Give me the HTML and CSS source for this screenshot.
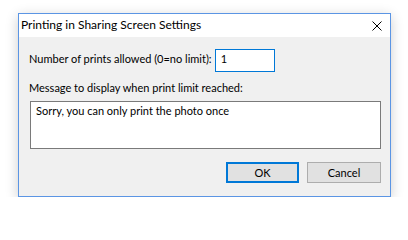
FILE: index.html
```html
<!DOCTYPE html>
<html>
<head>
<meta charset="utf-8">
<link rel="stylesheet" href="styles.css">
</head>
<body>
<div class="dialog">
  <div class="titlebar">
    <span class="title">Printing in Sharing Screen Settings</span>
    <svg class="close" width="10" height="10" viewBox="0 0 10 10"><path d="M0.5 0.5L9.5 9.5M9.5 0.5L0.5 9.5" stroke="#000" stroke-width="1" fill="none"/></svg>
  </div>
  <div class="client">
    <div class="row">
      <span class="label">Number of prints allowed (0=no limit):</span>
      <div class="input">1</div>
    </div>
    <div class="label msg-label">Message to display when print limit reached:</div>
    <div class="textarea">Sorry, you can only print the photo once</div>
    <div class="buttons">
      <div class="btn btn-default">OK</div>
      <div class="btn btn-cancel">Cancel</div>
    </div>
  </div>
</div>
</body>
</html>
```
FILE: styles.css
```css
html, body {
  margin: 0;
  padding: 0;
  background: #ffffff;
}
body {
  font-family: Lato, "Liberation Sans", sans-serif;
  font-size: 11px;
  color: #000;
  padding: 13px 0 0 18px;
}
.dialog {
  box-sizing: border-box;
  width: 373px;
  height: 184px;
  border: 1px solid #5b95e4;
  background: #f0f0f0;
  display: flex;
  flex-direction: column;
  box-shadow: 0 3px 12px rgba(0, 0, 0, 0.2);
}
.titlebar {
  height: 23px;
  background: #ffffff;
  display: flex;
  align-items: center;
  justify-content: space-between;
  padding: 0 8px 0 2px;
}
.title {
  font-size: 12px;
  line-height: 22px;
  padding-bottom: 1px;
}
.close {
  display: block;
}
.client {
  flex: 1;
  display: flex;
  flex-direction: column;
  padding: 12px 9px 0 11px;
}
.row {
  display: flex;
  align-items: baseline;
  gap: 3px;
}
.label {
  line-height: 16px;
  margin-left: -1px;
}
.input {
  box-sizing: border-box;
  width: 60px;
  height: 23px;
  border: 1px solid #0078d7;
  background: #fff;
  padding: 1px 5px;
  line-height: 16px;
}
.msg-label {
  margin-top: 8px;
}
.textarea {
  box-sizing: border-box;
  height: 48px;
  margin-top: 5px;
  border: 1px solid #7a7a7a;
  background: #fff;
  padding: 1px 5px;
  line-height: 16px;
}
.buttons {
  display: flex;
  justify-content: flex-end;
  gap: 8px;
  margin-top: 13px;
}
.btn {
  box-sizing: border-box;
  height: 21px;
  background: #e1e1e1;
  border: 1px solid #adadad;
  display: flex;
  align-items: center;
  justify-content: center;
  line-height: 16px;
}
.btn-default {
  width: 73px;
  border: 2px solid #0078d7;
}
.btn-cancel {
  width: 74px;
}
```
